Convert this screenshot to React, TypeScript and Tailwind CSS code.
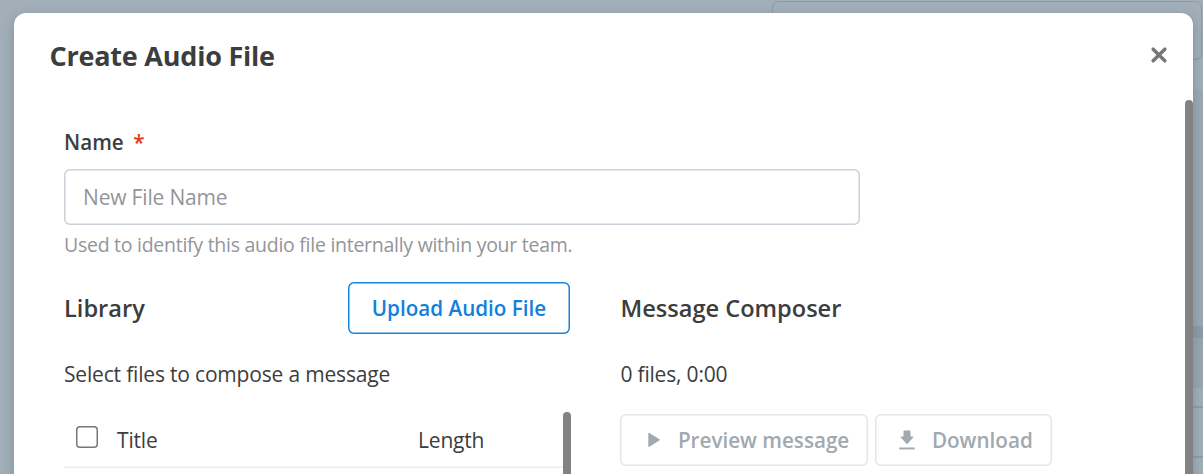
import React from "react";

function Backdrop() {
  return (
    <div className="absolute inset-0 bg-[#a2afb8]">
      <div className="absolute left-[771.500px] top-[1px] h-[59px] w-[430px] rounded-md border border-[#8b9ba8]" />
      <div className="absolute right-0 top-[90px] h-[236px] w-4 bg-[#9ca9b3]" />
      <div className="absolute right-0 top-[326px] h-3 w-4 bg-[#8e9ca9]" />
      <div className="absolute right-0 top-[338px] h-[50px] w-4 bg-[#9aa7b0]" />
      <div className="absolute right-0 top-[406px] h-[52px] w-4 border-y-2 border-[#8f9daa]" />
    </div>
  );
}

function PlayIcon() {
  return (
    <svg className="h-4 w-3" viewBox="0 0 12 16" fill="currentColor">
      <path d="M.3 1.5c0-.6.5-.9 1-.6l10.100 6.400c.5.3.5.8 0 1.100L1.300 14.800c-.5.3-1 0-1-.6z" />
    </svg>
  );
}

function DownloadIcon() {
  return (
    <svg className="h-5 w-4" viewBox="0 0 16 20" fill="currentColor">
      <path d="M5.200.4h5.600c.4 0 .7.3.7.7v5.500h2.300c.5 0 .7.5.4.9l-5.700 6.200c-.3.3-.7.3-1 0L1.800 7.500c-.3-.4-.1-.9.4-.9h2.300V1.100c0-.4.3-.7.700-.7z" />
      <path d="M.2 17.500h15.600v1.900H.2z" />
    </svg>
  );
}

export default function App() {
  return (
    <div
      className="relative h-[474px] w-full overflow-hidden pl-[14px] pr-[10.500px] pt-[12.500px] text-[21px] tracking-[-0.180px] text-[#3c3d3e] antialiased"
      style={{ fontFamily: '"Open Sans", sans-serif' }}
    >
      <Backdrop />
      <div className="relative flex h-[480px] flex-col rounded-t-[12px] bg-white shadow-[0_4px_12px_rgba(60,80,100,0.35)]">
        <header className="flex h-[87px] shrink-0 items-center justify-between pb-[2px] pl-[35.500px] pr-[26px]">
          <h1 className="text-[27px] font-bold leading-none tracking-[-0.220px]">Create Audio File</h1>
          <button aria-label="Close" className="text-[#777]">
            <svg className="h-4 w-4" viewBox="0 0 16 16" fill="none" stroke="currentColor" strokeWidth="3.500" strokeLinecap="round">
              <path d="M2.200 2.200l11.600 11.600M13.800 2.200L2.200 13.800" />
            </svg>
          </button>
        </header>
        <div className="flex min-h-0 flex-1">
          <main className="flex min-w-0 flex-1 flex-col pl-[50px] pt-7">
            <label className="flex h-[30px] items-center gap-[9.500px] text-[20.650px] font-semibold tracking-normal">
              Name <span className="text-[#e5391a]">*</span>
            </label>
            <input
              placeholder="New File Name"
              className="mt-[11px] h-[56px] w-[796px] shrink-0 rounded-md px-[19px] pt-px tracking-[-0.180px] shadow-[inset_0_0_0_1.500px_#cbd1d8] placeholder:text-[#939598] placeholder:opacity-100"
            />
            <p className="mt-[5px] h-[30px] text-[19.500px] leading-[30px] tracking-[-0.270px] text-[#939598]">
              Used to identify this audio file internally within your team.
            </p>
            <div className="mt-[22px] flex gap-[50.400px]">
              <section className="w-[506px]">
                <div className="flex items-center justify-between">
                  <h2 className="pt-[2px] text-[23.600px] font-semibold tracking-normal">Library</h2>
                  <button className="h-[52px] w-[222px] rounded-md pt-[2px] text-[20.650px] font-semibold tracking-normal text-[#1080dc] shadow-[inset_0_0_0_1.500px_#1683dc]">
                    Upload Audio File
                  </button>
                </div>
                <p className="mt-[25px] h-[30px] leading-[30px]">Select files to compose a message</p>
                <div className="mt-[23px] flex h-[70px] justify-between">
                  <div className="flex h-[56px] flex-1 items-center pl-3 shadow-[inset_0_-1.500px_0_#eaebec]">
                    <span className="mb-[5px] h-[22px] w-[22px] rounded shadow-[inset_0_0_0_1.500px_#747678]" />
                    <span className="ml-[19px] w-[301px] pt-[2px]">Title</span>
                    <span className="pt-[2px]">Length</span>
                  </div>
                  <div className="mr-[-1px] w-2 rounded-t-full bg-[#828282]" />
                </div>
              </section>
              <section>
                <h2 className="flex h-[52px] items-center pt-[2px] text-[23.600px] font-semibold tracking-normal">Message Composer</h2>
                <p className="mt-[25px] h-[30px] leading-[30px]">0 files, 0:00</p>
                <div className="mt-[25px] flex gap-[6.500px] text-[20.650px] font-semibold tracking-normal text-[#a1a9af]">
                  <button className="flex h-[52px] w-[248px] items-center rounded-md pl-[27.500px] shadow-[inset_0_0_0_1.500px_#e2e5ea]">
                    <PlayIcon />
                    <span className="ml-[18px] whitespace-nowrap pt-[2px]">Preview message</span>
                  </button>
                  <button className="flex h-[52px] w-[177px] items-center rounded-md pl-[24px] shadow-[inset_0_0_0_1.500px_#e2e5ea]">
                    <DownloadIcon />
                    <span className="ml-[17px] pt-[2px]">Download</span>
                  </button>
                </div>
              </section>
            </div>
          </main>
          <div className="w-[7.500px] rounded-t-full bg-[#828282]" />
        </div>
      </div>
    </div>
  );
}
